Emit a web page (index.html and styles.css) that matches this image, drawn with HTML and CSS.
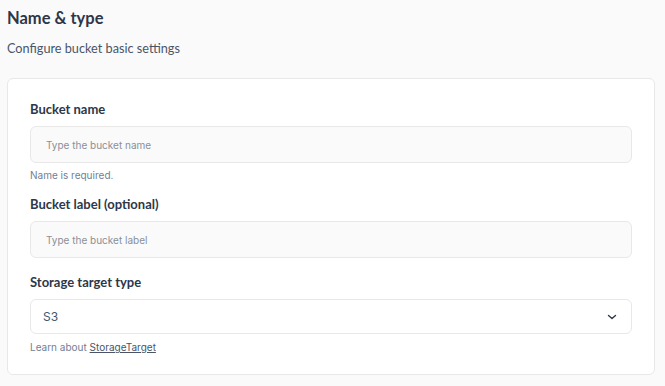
FILE: index.html
```html
<!DOCTYPE html>
<html lang="en">
<head>
    <meta charset="UTF-8">
    <meta name="viewport" content="width=device-width, initial-scale=1.0">
    <title>Name &amp; type</title>
    <link rel="stylesheet" href="styles.css">
</head>
<body>
    <div class="section">
        <h2 class="section-title">Name &amp; type</h2>
        <p class="section-sub">Configure bucket basic settings</p>

        <div class="card">
            <div class="field">
                <label class="field-label">Bucket name</label>
                <div class="input">Type the bucket name</div>
                <p class="hint">Name is required.</p>
            </div>

            <div class="field">
                <label class="field-label">Bucket label (optional)</label>
                <div class="input">Type the bucket label</div>
            </div>

            <div class="field">
                <label class="field-label">Storage target type</label>
                <div class="select">
                    <span>S3</span>
                    <svg class="chevron" width="12" height="12" viewBox="0 0 12 12">
                        <path d="M2.5 4.5 L6 7.5 L9.5 4.5" fill="none" stroke="#2d3748" stroke-width="1.4" stroke-linecap="round" stroke-linejoin="round"/>
                    </svg>
                </div>
                <p class="hint hint-link">Learn about <a href="#">StorageTarget</a></p>
            </div>
        </div>
    </div>
</body>
</html>
```

FILE: styles.css
```css
body {
    margin: 0;
    padding: 0 7px;
    background: #fafafa;
    font-family: Lato, "Open Sans", sans-serif;
    color: #2d3748;
}
.section-title {
    margin: 0;
    padding-top: 8px;
    font-size: 16.5px;
    line-height: 20px;
    font-weight: 700;
    color: #2d3748;
}
.section-sub {
    margin: 12px 0 0;
    font-size: 12.7px;
    line-height: 16px;
    color: #4a5568;
}
.card {
    margin-top: 22px;
    background: #fff;
    border: 1px solid #e8e8e8;
    border-radius: 6px;
    padding: 22px 22px 21px;
    width: 602px;
}
.field {
    margin-bottom: 15px;
}
.field:nth-child(2) {
    margin-bottom: 16px;
}
.field:last-child {
    margin-bottom: 0;
}
.field-label {
    display: block;
    font-size: 13px;
    line-height: 16px;
    font-weight: 700;
    color: #2d3748;
    margin-bottom: 9px;
}
.input, .select {
    box-sizing: border-box;
    height: 37px;
    border: 1px solid #e8e8e8;
    border-radius: 6px;
    background: #fafafa;
    padding: 0 15px;
    display: flex;
    align-items: center;
    font-family: Inter, sans-serif;
    font-size: 10px;
    color: #8a8f98;
}
.select {
    height: 35px;
    background: #fff;
    padding: 0 13px 0 12px;
    justify-content: space-between;
    font-size: 12px;
    color: #4a5568;
}
.hint {
    margin: 6px 0 0;
    font-family: Inter, sans-serif;
    font-size: 10px;
    line-height: 12px;
    color: #718096;
}
.hint-link {
    margin-top: 7px;
}
.hint a {
    color: #4a5568;
}
```
